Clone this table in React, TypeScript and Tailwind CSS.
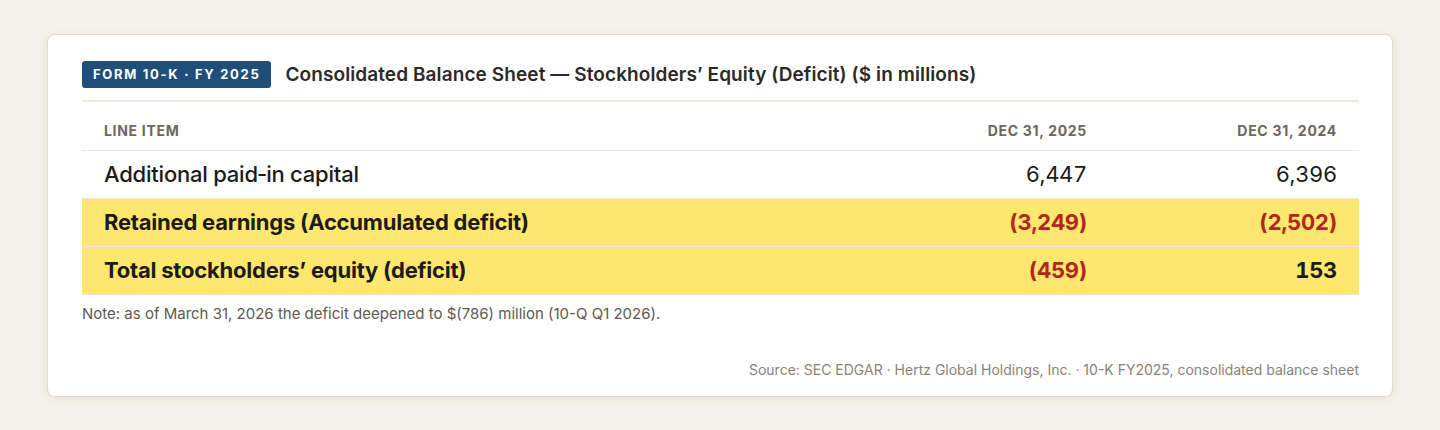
const rows = [
  { label: "Additional paid\u2011in capital", a: "6,447", b: "6,396", hi: false, negA: false, negB: false },
  { label: "Retained earnings (Accumulated deficit)", a: "(3,249)", b: "(2,502)", hi: true, negA: true, negB: true },
  { label: "Total stockholders\u2019 equity (deficit)", a: "(459)", b: "153", hi: true, negA: true, negB: false },
];

const App = () => {
  return (
    <div className="min-h-[430px] w-full bg-[#f4f1ea] px-[47px] pt-[34px] font-['Inter','Liberation_Sans',sans-serif]">
      <div className="rounded-[8px] border border-[#e2ddd2] bg-white pl-[34px] pr-[33px] pt-[26px] pb-[16px] shadow-[0_2px_10px_rgba(80,70,50,0.08)]">
        <header className="flex h-[41px] items-start gap-[14px] border-b-2 border-[#efe9dc]">
          <span className="flex h-[27px] items-center rounded-[3px] bg-[#1f4e79] px-[11px] text-[13px] font-bold tracking-[0.13em] text-white">
            FORM 10-K · FY 2025
          </span>
          <h1 className="text-[19px] leading-[27px] font-semibold tracking-[0.005em] text-[#2b2a28]">
            Consolidated Balance Sheet — Stockholders’ Equity (Deficit) ($ in millions)
          </h1>
        </header>

        <div className="grid grid-cols-[1fr_250px_250px]">
          <div className="border-b border-[#eeeadf] px-[22px] pt-[18px] pb-[9px] text-[14px] font-bold tracking-[0.05em] text-[#6e665c]">
            LINE ITEM
          </div>
          <div className="border-b border-[#eeeadf] px-[22px] pt-[18px] pb-[9px] text-right text-[14px] font-bold tracking-[0.05em] text-[#6e665c]">
            DEC 31, 2025
          </div>
          <div className="border-b border-[#eeeadf] px-[22px] pt-[18px] pb-[9px] text-right text-[14px] font-bold tracking-[0.05em] text-[#6e665c]">
            DEC 31, 2024
          </div>

          {rows.map((r) => (
            <div key={r.label} className={`contents ${r.hi ? "font-bold" : "font-medium"}`}>
              <div
                className={`flex h-[48px] items-center border-b border-[#ece8dd] px-[22px] text-[22px] tracking-[-0.01em] text-[#1c1b19] ${r.hi ? "bg-[#fee76e]" : ""}`}
              >
                {r.label}
              </div>
              <div
                className={`flex h-[48px] items-center justify-end border-b border-[#ece8dd] px-[22px] text-[22px] tracking-[-0.015em] tabular-nums ${r.hi ? "bg-[#fee76e]" : "font-normal"} ${r.negA ? "text-[#b3261e]" : "text-[#1c1b19]"}`}
              >
                {r.a}
              </div>
              <div
                className={`flex h-[48px] items-center justify-end border-b border-[#ece8dd] px-[22px] text-[22px] tracking-[-0.015em] tabular-nums ${r.hi ? "bg-[#fee76e]" : "font-normal"} ${r.negB ? "text-[#b3261e]" : "text-[#1c1b19]"}`}
              >
                {r.b}
              </div>
            </div>
          ))}
        </div>

        <p className="mt-[8px] text-[15px] text-[#5f594f]">
          Note: as of March 31, 2026 the deficit deepened to $(786) million (10-Q Q1 2026).
        </p>
        <p className="mt-[33px] text-right text-[14px] text-[#8a8377]">
          Source: SEC EDGAR · Hertz Global Holdings, Inc. · 10-K FY2025, consolidated balance sheet
        </p>
      </div>
    </div>
  );
};

export default App;
